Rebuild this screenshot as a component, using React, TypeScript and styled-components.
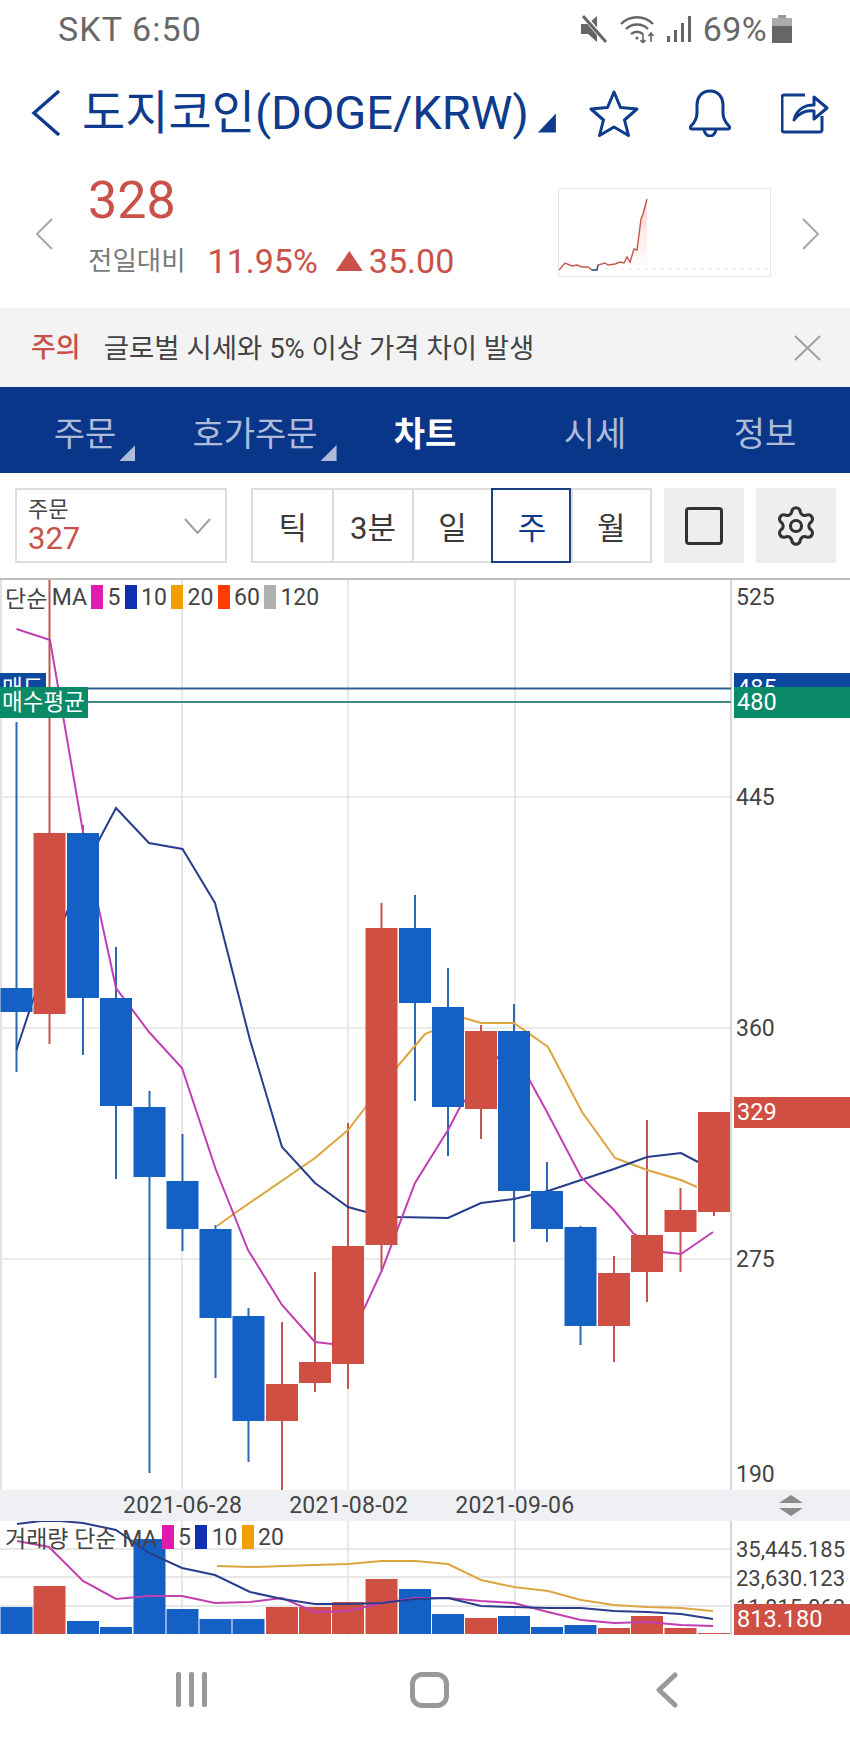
import React from "react";
import styled, { createGlobalStyle } from "styled-components";
import { Settings } from "lucide-react";

const NAVY = "#0f3b8c";
const RED = "#cf4f43";
const BLUE = "#1560c4";
const PRICE_RED = "#c9514a";
const MAGENTA = "#c23fb2";
const MA_NAVY = "#2a3d8c";
const MA_ORANGE = "#dca53f";

const GlobalStyle = createGlobalStyle`
  html, body { margin: 0; padding: 0; background: #fff; }
  body { font-family: Roboto, "Noto Sans CJK KR", sans-serif; }
  #root { width: 850px; height: 1748px; overflow: hidden; }
`;

// [center x, body top, body bottom, wick top, wick bottom, up?]
const CANDLES: [number, number, number, number, number, boolean][] = [
  [16.5, 988, 1012, 722, 1072, false],
  [49.5, 833, 1014, 579, 1044, true],
  [83, 833, 998, 825, 1055, false],
  [116, 998, 1106, 947, 1179, false],
  [149.5, 1107, 1177, 1091, 1473, false],
  [182.5, 1181, 1229, 1134, 1251, false],
  [215.5, 1229, 1318, 1225, 1378, false],
  [248.5, 1316, 1421, 1308, 1462, false],
  [282, 1384, 1421, 1322, 1490, true],
  [315, 1362, 1383, 1272, 1392, true],
  [348, 1246, 1364, 1123, 1389, true],
  [381.5, 928, 1245, 903, 1270, true],
  [415, 928, 1003, 895, 1101, false],
  [448, 1007, 1107, 968, 1156, false],
  [481, 1031, 1109, 1025, 1139, true],
  [514, 1031, 1191, 1004, 1242, false],
  [547, 1191, 1229, 1162, 1242, false],
  [580.5, 1227, 1326, 1226, 1345, false],
  [614, 1273, 1326, 1256, 1362, true],
  [647, 1235, 1272, 1120, 1302, true],
  [680.5, 1210, 1232, 1188, 1272, true],
  [714, 1112, 1212, 1112, 1216, true],
];

const VOLUME_TOPS = [
  1607, 1586, 1621, 1627, 1539, 1609, 1619, 1619, 1607, 1607, 1602, 1579, 1589, 1614, 1618, 1616,
  1627, 1625, 1628, 1616, 1628, 1633,
];

const line = (pts: number[][]) => pts.map((p) => p.join(",")).join(" ");

const PRICE_MA5 = [
  [16.5, 629], [50, 640], [83, 832], [98, 905], [116, 988], [149, 1032], [182, 1068], [216, 1170],
  [248, 1250], [282, 1305], [315, 1342], [332, 1344], [364, 1309], [382, 1270], [415, 1183],
  [448, 1130], [460, 1107], [498, 1057], [514, 1045], [530, 1081], [547, 1112], [581, 1177],
  [614, 1210], [633, 1233], [663, 1252], [681, 1254], [713, 1232],
];
const PRICE_MA10 = [
  [16.5, 1050], [32, 1003], [67, 912], [99, 840], [116, 808], [149, 843], [182.5, 849], [215, 903],
  [250, 1040], [282, 1147], [315, 1183], [348, 1207], [366, 1212], [397, 1217], [448, 1218],
  [481, 1203], [514, 1199], [548, 1191], [581, 1180], [614, 1169], [647, 1157], [681, 1153], [698, 1162],
];
const PRICE_MA20 = [
  [217, 1226], [235, 1213], [315, 1158], [348, 1130], [365, 1108], [397, 1067], [425, 1034],
  [464, 1018], [481, 1023], [514, 1023], [548, 1047], [582, 1112], [615, 1158], [647, 1170],
  [681, 1180], [697, 1187],
];
const VOL_MA5 = [
  [17, 1541], [49, 1547], [83, 1581], [116, 1599], [149, 1596], [182, 1596], [215, 1603], [250, 1602],
  [282, 1598], [315, 1612], [348, 1611], [382, 1603], [415, 1598], [448, 1598], [481, 1601], [514, 1603],
  [548, 1612], [581, 1620], [614, 1623], [647, 1622], [681, 1625], [713, 1626],
];
const VOL_MA10 = [
  [17, 1524], [49, 1520], [83, 1523], [116, 1530], [149, 1553], [182, 1568], [215, 1575], [250, 1592],
  [282, 1599], [315, 1604], [348, 1604], [382, 1603], [415, 1599], [448, 1598], [481, 1606], [514, 1607],
  [548, 1608], [581, 1608], [614, 1611], [647, 1612], [681, 1614], [713, 1619],
];
const VOL_MA20 = [
  [217, 1566], [250, 1567], [315, 1565], [348, 1564], [382, 1561], [415, 1561], [448, 1564], [481, 1580],
  [514, 1587], [548, 1591], [581, 1600], [614, 1605], [647, 1607], [681, 1608], [713, 1611],
];

const SPARK = [
  [0, 81], [6, 74], [13, 77], [18, 76], [23, 78], [29, 78], [33, 81], [38, 81], [39, 76], [46, 74],
  [49, 76], [56, 75], [61, 73], [65, 74], [68, 68], [71, 73], [75, 60], [78, 61], [82, 30], [84, 25], [88, 10],
];

const CHART_TOP = 580;
const VOLUME_TOP = 1521;

const Page = styled.div`
  width: 850px;
  height: 1748px;
  display: flex;
  flex-direction: column;
  background: #fff;
  overflow: hidden;
`;

const StatusBar = styled.div`
  height: 60px;
  flex: none;
  display: flex;
  align-items: center;
  justify-content: space-between;
  padding: 0 58px 2px 58px;
  box-sizing: border-box;
  color: #686868;
  font-size: 34px;
  letter-spacing: 1.1px;
`;

const StatusIcons = styled.div`
  display: flex;
  align-items: center;
  gap: 11px;
  letter-spacing: 0.4px;
`;

const BatteryIcon = styled.svg`
  margin-left: -6px;
`;

const Header = styled.div`
  height: 106px;
  flex: none;
  display: flex;
  align-items: center;
  padding-left: 31px;
  color: ${NAVY};
`;

const Title = styled.div`
  margin-left: 21px;
  font-size: 47px;
  white-space: nowrap;
  line-height: 56px;
`;

const TitleCaret = styled.span`
  width: 18px;
  height: 19px;
  margin: 20px 0 0 9px;
  background: ${NAVY};
  clip-path: polygon(100% 0, 100% 100%, 0 100%);
`;

const HeaderIcons = styled.div`
  margin-left: 33px;
  display: flex;
  align-items: center;
  gap: 49px;
`;

const Quote = styled.div`
  height: 142px;
  flex: none;
  display: flex;
  align-items: center;
  padding: 0 30px 10px 35px;
  box-sizing: border-box;
`;

const Pager = styled.svg`
  margin-top: 4px;
  flex: none;
`;

const PriceBlock = styled.div`
  flex: 1;
  margin: 0 0 12px 35px;
  color: ${PRICE_RED};
`;

const Price = styled.div`
  font-size: 52px;
  line-height: 60px;
  height: 60px;
`;

const ChangeRow = styled.div`
  margin-top: 10px;
  display: flex;
  align-items: center;
  font-size: 34px;
  line-height: 40px;
`;

const ChangeLabel = styled.span`
  color: #7a7a7a;
  font-size: 26.500px;
  margin-right: 22px;
`;

const UpMark = styled.span`
  width: 27px;
  height: 20px;
  margin: 0 6px 0 18px;
  background: ${PRICE_RED};
  clip-path: polygon(50% 0, 100% 100%, 0 100%);
`;

const SparkBox = styled.div`
  width: 213px;
  height: 89px;
  margin-right: 31px;
  border: 1px solid #e6e6e6;
  box-sizing: border-box;
`;

const Notice = styled.div`
  height: 79px;
  flex: none;
  display: flex;
  align-items: center;
  padding: 0 29px 0 31px;
  background: #f3f3f3;
  font-size: 27.500px;
  color: #444;
`;

const NoticeTag = styled.span`
  color: ${PRICE_RED};
  font-weight: 500;
  font-size: 27px;
  margin-right: 23px;
  padding-bottom: 4px;
`;

const NoticeText = styled.span`
  flex: 1;
  padding-bottom: 4px;
`;

const Nav = styled.div`
  height: 86px;
  flex: none;
  display: grid;
  grid-template-columns: repeat(5, 170px);
  background: #0a368a;
  padding-top: 3px;
  box-sizing: border-box;
`;

const NavItem = styled.div<{ $active?: boolean }>`
  display: flex;
  align-items: center;
  justify-content: center;
  font-size: 34px;
  font-weight: ${(p) => (p.$active ? 700 : 400)};
  color: ${(p) => (p.$active ? "#fff" : "#aebbd9")};
`;

const NavLabel = styled.span`
  position: relative;
`;

const NavCaret = styled.span`
  position: absolute;
  left: calc(100% + 3px);
  bottom: -5px;
  width: 16px;
  height: 16px;
  background: #aebbd9;
  clip-path: polygon(100% 0, 100% 100%, 0 100%);
`;

const Toolbar = styled.div`
  height: 105px;
  flex: none;
  display: flex;
  gap: 12px;
  padding: 15px 14px 15px 15px;
  box-sizing: border-box;
`;

const Select = styled.div`
  width: 212px;
  margin-right: 12px;
  border: 2px solid #ddd;
  box-sizing: border-box;
  display: flex;
  align-items: center;
  justify-content: space-between;
  padding: 0 14px 0 11px;
`;

const SelectLabel = styled.div`
  font-size: 22px;
  line-height: 26px;
  color: #444;
`;

const SelectValue = styled.div`
  font-size: 31px;
  line-height: 32px;
  color: ${PRICE_RED};
`;

const Periods = styled.div`
  width: 401px;
  display: grid;
  grid-template-columns: repeat(5, 1fr);
  border: 2px solid #ddd;
  box-sizing: border-box;
`;

const Period = styled.div<{ $active?: boolean }>`
  display: flex;
  align-items: center;
  justify-content: center;
  font-size: 31px;
  color: ${(p) => (p.$active ? NAVY : "#3a3a3a")};
  border-left: 2px solid #ddd;
  margin: ${(p) => (p.$active ? "-2px 0" : "0")};
  outline: ${(p) => (p.$active ? `2px solid #1a3f80` : "none")};
  outline-offset: -2px;
  &:first-child { border-left: none; }
`;

const IconButton = styled.div`
  width: 80px;
  display: flex;
  align-items: center;
  justify-content: center;
  background: #eee;
  color: #333;
`;

const SquareGlyph = styled.span`
  width: 38px;
  height: 38px;
  border: 3px solid #333;
  border-radius: 4px;
  box-sizing: border-box;
`;

const ChartPane = styled.div`
  position: relative;
  height: 912px;
  flex: none;
  border-top: 2px solid #bdbdbd;
  box-sizing: border-box;
  overflow: hidden;
`;

const ChartSvg = styled.svg`
  display: block;
`;

const Legend = styled.div<{ $top: number }>`
  position: absolute;
  left: 5px;
  top: ${(p) => p.$top}px;
  height: 24px;
  display: flex;
  align-items: center;
  gap: 4.300px;
  font-size: 23px;
  color: #444;
  white-space: nowrap;
`;

const Swatch = styled.span<{ $color: string }>`
  width: 12px;
  height: 24px;
  background: ${(p) => p.$color};
`;

const AxisLabel = styled.span<{ $y: number; $small?: boolean }>`
  position: absolute;
  left: 736px;
  top: ${(p) => p.$y - 14}px;
  line-height: 30px;
  font-size: ${(p) => (p.$small ? 22 : 23)}px;
  color: #444;
  white-space: nowrap;
`;

const PriceTag = styled.div<{ $y: number; $color: string; $side: "left" | "right"; $w?: number }>`
  position: absolute;
  top: ${(p) => p.$y}px;
  height: 31px;
  line-height: 31px;
  left: ${(p) => (p.$side === "left" ? 0 : 734)}px;
  width: ${(p) => (p.$side === "left" ? p.$w : 116)}px;
  padding-left: ${(p) => (p.$side === "left" ? 2 : 3)}px;
  box-sizing: border-box;
  background: ${(p) => p.$color};
  color: #fff;
  font-size: ${(p) => (p.$side === "left" ? 22.5 : 23.5)}px;
  white-space: nowrap;
  overflow: hidden;
`;

const DateBar = styled.div`
  height: 31px;
  flex: none;
  display: flex;
  align-items: center;
  gap: 47px;
  padding: 0 47px 0 123px;
  background: #eef0f4;
  font-size: 23px;
  letter-spacing: 0.3px;
  color: #444;
`;

const SplitHandle = styled.svg`
  margin-left: auto;
`;

const VolumePane = styled.div`
  position: relative;
  height: 114px;
  flex: none;
  overflow: hidden;
`;

const SoftKeys = styled.div`
  flex: 1;
  display: grid;
  grid-template-columns: repeat(3, 238px);
  justify-content: center;
  align-items: center;
  padding: 0 0 4px 8px;
`;

const SoftKey = styled.div`
  display: flex;
  justify-content: center;
`;

const Bars = styled.div`
  display: flex;
  gap: 8px;
`;

const Bar = styled.span`
  width: 5px;
  height: 35px;
  border-radius: 2px;
  background: #999;
`;

const HomeKey = styled.span`
  width: 39px;
  height: 36px;
  border: 5px solid #999;
  border-radius: 12px;
  box-sizing: border-box;
`;

const Candles = () => (
  <>
    {CANDLES.map(([x, , , top, bottom, up]) => (
      <line key={x} x1={x} x2={x} y1={top} y2={bottom} stroke={up ? "#c0564f" : "#2d68b0"} strokeWidth={2} />
    ))}
    <polyline points={line(PRICE_MA20)} fill="none" stroke={MA_ORANGE} strokeWidth={2} />
    <polyline points={line(PRICE_MA10)} fill="none" stroke={MA_NAVY} strokeWidth={2} />
    <polyline points={line(PRICE_MA5)} fill="none" stroke={MAGENTA} strokeWidth={2} />
    {CANDLES.map(([x, top, bottom, , , up]) => (
      <rect key={x} x={x - 16} y={top} width={32} height={bottom - top} fill={up ? RED : BLUE} />
    ))}
  </>
);

const PriceChart = () => (
  <ChartSvg width={850} height={910} viewBox={`0 ${CHART_TOP} 850 910`}>
    <line x1={1} x2={1} y1={580} y2={1490} stroke="#e2e2e2" strokeWidth={2} />
    {[182, 348, 515].map((x) => (
      <line key={x} x1={x} x2={x} y1={580} y2={1490} stroke="#e0e0e0" strokeWidth={1.5} />
    ))}
    {[797, 1028, 1259].map((y) => (
      <line key={y} x1={0} x2={731} y1={y} y2={y} stroke="#e4e4e4" strokeWidth={1.5} />
    ))}
    <line x1={731} x2={731} y1={580} y2={1490} stroke="#d8d8d8" strokeWidth={2} />
    <Candles />
    <line x1={0} x2={731} y1={688.5} y2={688.5} stroke="#33608f" strokeWidth={1.8} />
    <line x1={0} x2={731} y1={702} y2={702} stroke="#3f8a7e" strokeWidth={1.8} />
  </ChartSvg>
);

const VolumeChart = () => (
  <ChartSvg width={850} height={114} viewBox={`0 ${VOLUME_TOP} 850 114`}>
    {[182, 348, 515].map((x) => (
      <line key={x} x1={x} x2={x} y1={1521} y2={1635} stroke="#e0e0e0" strokeWidth={1.5} />
    ))}
    {[1549, 1577, 1606].map((y) => (
      <line key={y} x1={0} x2={731} y1={y} y2={y} stroke="#e0e0e0" strokeWidth={1.5} />
    ))}
    <line x1={731} x2={731} y1={1521} y2={1635} stroke="#d8d8d8" strokeWidth={2} />
    {CANDLES.map(([x, , , , , up], i) => (
      <rect key={x} x={x - 16} y={VOLUME_TOPS[i]} width={32} height={1634 - VOLUME_TOPS[i]} fill={up ? RED : BLUE} />
    ))}
    <polyline points={line(VOL_MA20)} fill="none" stroke={MA_ORANGE} strokeWidth={2} />
    <polyline points={line(VOL_MA5)} fill="none" stroke={MAGENTA} strokeWidth={2} />
    <polyline points={line(VOL_MA10)} fill="none" stroke={MA_NAVY} strokeWidth={2} />
  </ChartSvg>
);

const Sparkline = () => {
  const blue = SPARK.slice(6, 9);
  return (
    <svg width={211} height={87} viewBox="0 0 211 87">
      <defs>
        <linearGradient id="sparkFill" x1="0" y1="0" x2="0" y2="1">
          <stop offset="0" stopColor="#f8d5d1" />
          <stop offset="1" stopColor="#fff" />
        </linearGradient>
      </defs>
      <polygon points="68,80 75,60 78,61 82,30 84,25 88,10 88,80" fill="url(#sparkFill)" />
      <line x1={38} x2={211} y1={80} y2={80} stroke="#e3e3e3" strokeWidth={1} strokeDasharray="3 5" />
      <polyline points={line(SPARK)} fill="none" stroke="#c2574f" strokeWidth={1.4} />
      <polyline points={line(blue)} fill="none" stroke="#2d68b0" strokeWidth={1.4} />
    </svg>
  );
};

const App: React.FC = () => {
  return (
    <Page>
      <GlobalStyle />
      <StatusBar>
        <span>SKT 6:50</span>
        <StatusIcons>
          <svg width={28} height={28} viewBox="0 0 28 28" fill="#666">
            <path d="M1 9h7l9-8v26l-9-8H1z" />
            <path d="M4 1l22 26" stroke="#fff" strokeWidth={5} />
            <path d="M3 1l23 26" stroke="#666" strokeWidth={3} />
          </svg>
          <svg width={37} height={28} viewBox="0 0 37 28" fill="none" stroke="#666" strokeWidth={2.4}>
            <path d="M2 9C11 0 25 0 34 9" />
            <path d="M7 14c6-6 16-6 22 0" />
            <path d="M12 19c4-3 8-3 12 0" />
            <circle cx={18} cy={23} r={1.6} fill="#666" stroke="none" />
            <path d="M24 28v-9M21.500 25l2.500 3 2.500-3" strokeWidth={1.6} />
            <path d="M32 18v9M29.500 21l2.500-3 2.500 3" strokeWidth={1.6} />
          </svg>
          <svg width={25} height={26} viewBox="0 0 25 26" fill="#666">
            <rect x={0} y={20} width={3} height={6} />
            <rect x={7} y={14} width={3} height={12} />
            <rect x={14} y={7} width={3} height={19} />
            <rect x={21} y={0} width={3} height={26} />
          </svg>
          <span>69%</span>
          <BatteryIcon width={20} height={28} viewBox="0 0 20 28">
            <rect x={6} y={0} width={8} height={3} fill="#999" />
            <rect x={0} y={3} width={20} height={8} fill="#aaa" />
            <rect x={0} y={11} width={20} height={17} fill="#666" />
          </BatteryIcon>
        </StatusIcons>
      </StatusBar>

      <Header>
        <svg width={30} height={48} viewBox="0 0 30 48" fill="none" stroke={NAVY} strokeWidth={3.4}>
          <path d="M28 2L3 24l25 22" />
        </svg>
        <Title>도지코인(DOGE/KRW)</Title>
        <TitleCaret />
        <HeaderIcons>
          <svg width={50} height={48} viewBox="0 0 50 48" fill="none" stroke={NAVY} strokeWidth={3} strokeLinejoin="round">
            <path d="M25 3l6.500 15.500 16.500 1.500-12.500 11 4 15.500L25 38l-14.500 8.500 4-15.500L2 20l16.500-1.500z" />
          </svg>
          <svg width={44} height={48} viewBox="0 0 44 48" fill="none" stroke={NAVY} strokeWidth={3} strokeLinejoin="round">
            <path d="M22 2c-9 0-13 7-13 14v8c0 6-3 10-6 13-1 1-1 3 1 3h36c2 0 2-2 1-3-3-3-6-7-6-13v-8c0-7-4-14-13-14z" />
            <path d="M16 40c0 4 3 7 6 7s6-3 6-7" />
          </svg>
          <svg width={48} height={42} viewBox="0 0 48 42" fill="none" stroke={NAVY} strokeWidth={3} strokeLinejoin="round">
            <path d="M24 3H3c-1 0-2 1-2 2v33c0 1 1 2 2 2h36c1 0 2-1 2-2V24" />
            <path d="M13 28c2-9 9-15 20-15V5l13 11-13 11v-8c-8-1-15 2-20 9z" />
          </svg>
        </HeaderIcons>
      </Header>

      <Quote>
        <Pager width={18} height={32} viewBox="0 0 18 32" fill="none" stroke="#a8a8a8" strokeWidth={2}>
          <path d="M17 1L2 16l15 15" />
        </Pager>
        <PriceBlock>
          <Price>328</Price>
          <ChangeRow>
            <ChangeLabel>전일대비</ChangeLabel>
            <span>11.95%</span>
            <UpMark />
            <span>35.00</span>
          </ChangeRow>
        </PriceBlock>
        <SparkBox>
          <Sparkline />
        </SparkBox>
        <Pager width={18} height={32} viewBox="0 0 18 32" fill="none" stroke="#a8a8a8" strokeWidth={2}>
          <path d="M1 1l15 15L1 31" />
        </Pager>
      </Quote>

      <Notice>
        <NoticeTag>주의</NoticeTag>
        <NoticeText>글로벌 시세와 5% 이상 가격 차이 발생</NoticeText>
        <svg width={27} height={26} viewBox="0 0 27 26" stroke="#a0a0a0" strokeWidth={2}>
          <path d="M1 1l25 24M26 1L1 25" />
        </svg>
      </Notice>

      <Nav>
        <NavItem>
          <NavLabel>
            주문
            <NavCaret />
          </NavLabel>
        </NavItem>
        <NavItem>
          <NavLabel>
            호가주문
            <NavCaret />
          </NavLabel>
        </NavItem>
        <NavItem $active>차트</NavItem>
        <NavItem>시세</NavItem>
        <NavItem>정보</NavItem>
      </Nav>

      <Toolbar>
        <Select>
          <div>
            <SelectLabel>주문</SelectLabel>
            <SelectValue>327</SelectValue>
          </div>
          <svg width={27} height={16} viewBox="0 0 27 16" fill="none" stroke="#a0a0a0" strokeWidth={2}>
            <path d="M1 1l12.500 14L26 1" />
          </svg>
        </Select>
        <Periods>
          <Period>틱</Period>
          <Period>3분</Period>
          <Period>일</Period>
          <Period $active>주</Period>
          <Period>월</Period>
        </Periods>
        <IconButton>
          <SquareGlyph />
        </IconButton>
        <IconButton>
          <Settings size={44} strokeWidth={1.7} />
        </IconButton>
      </Toolbar>

      <ChartPane>
        <PriceChart />
        <Legend $top={5}>
          <span>단순</span>
          <span>MA</span>
          <Swatch $color="#e01bb0" />
          <span>5</span>
          <Swatch $color="#0f2fb0" />
          <span>10</span>
          <Swatch $color="#ef9f00" />
          <span>20</span>
          <Swatch $color="#ff3c00" />
          <span>60</span>
          <Swatch $color="#b0b0b0" />
          <span>120</span>
        </Legend>
        <AxisLabel $y={597 - CHART_TOP}>525</AxisLabel>
        <AxisLabel $y={797 - CHART_TOP}>445</AxisLabel>
        <AxisLabel $y={1028 - CHART_TOP}>360</AxisLabel>
        <AxisLabel $y={1259 - CHART_TOP}>275</AxisLabel>
        <AxisLabel $y={1474 - CHART_TOP}>190</AxisLabel>
        <PriceTag $y={673 - CHART_TOP} $color="#0b4a9e" $side="left" $w={46}>매도</PriceTag>
        <PriceTag $y={673 - CHART_TOP} $color="#0b479f" $side="right">485</PriceTag>
        <PriceTag $y={687 - CHART_TOP} $color="#0b8a68" $side="left" $w={88}>매수평균</PriceTag>
        <PriceTag $y={687 - CHART_TOP} $color="#0b8a68" $side="right">480</PriceTag>
        <PriceTag $y={1097 - CHART_TOP} $color={RED} $side="right">329</PriceTag>
      </ChartPane>

      <DateBar>
        <span>2021-06-28</span>
        <span>2021-08-02</span>
        <span>2021-09-06</span>
        <SplitHandle width={24} height={21} viewBox="0 0 24 21" fill="#8a8a8a">
          <path d="M12 0l12 8H0z" />
          <path d="M0 13h24l-12 8z" />
        </SplitHandle>
      </DateBar>

      <VolumePane>
        <VolumeChart />
        <Legend $top={4}>
          <span>거래량 단순 MA</span>
          <Swatch $color="#e01bb0" />
          <span>5</span>
          <Swatch $color="#0f2fb0" />
          <span>10</span>
          <Swatch $color="#ef9f00" />
          <span>20</span>
        </Legend>
        <AxisLabel $small $y={1549 - VOLUME_TOP}>35,445.185</AxisLabel>
        <AxisLabel $small $y={1578 - VOLUME_TOP}>23,630.123</AxisLabel>
        <AxisLabel $small $y={1607 - VOLUME_TOP}>11,815.062</AxisLabel>
        <PriceTag $y={1604 - VOLUME_TOP} $color={RED} $side="right">813.180</PriceTag>
      </VolumePane>

      <SoftKeys>
        <SoftKey>
          <Bars>
            <Bar />
            <Bar />
            <Bar />
          </Bars>
        </SoftKey>
        <SoftKey>
          <HomeKey />
        </SoftKey>
        <SoftKey>
          <svg width={22} height={36} viewBox="0 0 22 36" fill="none" stroke="#999" strokeWidth={5} strokeLinecap="round" strokeLinejoin="round">
            <path d="M19 3L3 18l16 15" />
          </svg>
        </SoftKey>
      </SoftKeys>
    </Page>
  );
};

export default App;
